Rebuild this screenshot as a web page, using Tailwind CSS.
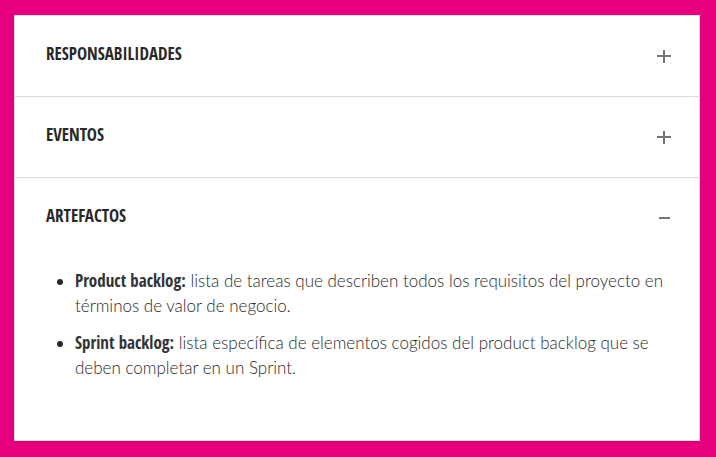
<!DOCTYPE html>
<html lang="es">
<head>
<meta charset="utf-8">
<meta name="viewport" content="width=device-width, initial-scale=1">
<title>Scrum</title>
<script src="https://cdn.jsdelivr.net/npm/@tailwindcss/browser@4"></script>
</head>
<body class="min-h-screen bg-[#e6007e] px-[14px] pt-[15px] pb-4 pr-4 text-[#282828]">
<main class="divide-y divide-[#dcdcdc] border border-[#dcdcdc] bg-white shadow-sm">
  <section>
    <h2><button type="button" aria-expanded="false" class="flex h-20 w-full items-center justify-between pr-[25px] pl-[31px] text-left font-['Open_Sans_Condensed','Open_Sans',sans-serif] text-[17px] leading-5 font-bold"><span class="pb-1">RESPONSABILIDADES</span>
      <svg class="size-5" viewBox="0 0 20 20" fill="none" stroke="#757575" stroke-width="2" aria-hidden="true"><path d="M3 10H17M10 4V17"/></svg></button></h2>
  </section>
  <section>
    <h2><button type="button" aria-expanded="false" class="flex h-20 w-full items-center justify-between pr-[25px] pl-[31px] text-left font-['Open_Sans_Condensed','Open_Sans',sans-serif] text-[17px] leading-5 font-bold"><span class="pb-1">EVENTOS</span>
      <svg class="size-5" viewBox="0 0 20 20" fill="none" stroke="#757575" stroke-width="2" aria-hidden="true"><path d="M3 10H17M10 4V17"/></svg></button></h2>
  </section>
  <section>
    <h2><button type="button" aria-expanded="true" aria-controls="artefactos" class="flex h-20 w-full items-center justify-between pr-[25px] pl-[31px] text-left font-['Open_Sans_Condensed','Open_Sans',sans-serif] text-[17px] leading-5 font-bold"><span class="pb-1">ARTEFACTOS</span>
      <svg class="size-5" viewBox="0 0 20 20" fill="none" stroke="#757575" stroke-width="2" aria-hidden="true"><path d="M5 10H16"/></svg></button></h2>
    <div id="artefactos" class="pt-[10px] pr-[25px] pb-[60px] pl-[31px] font-['Lato',sans-serif] text-[17px] leading-[25px] font-light">
      <ul class="list-disc space-y-3 pl-[29px]">
        <li><strong class="font-['Open_Sans_Condensed','Open_Sans',sans-serif] leading-5 font-bold text-[#333]">Product backlog:</strong> lista de tareas que describen todos los requisitos del proyecto en términos de valor de negocio.</li>
        <li><strong class="font-['Open_Sans_Condensed','Open_Sans',sans-serif] leading-5 font-bold text-[#333]">Sprint backlog:</strong> lista específica de elementos cogidos del product backlog que se deben completar en un Sprint.</li>
      </ul>
    </div>
  </section>
</main>
</body>
</html>
